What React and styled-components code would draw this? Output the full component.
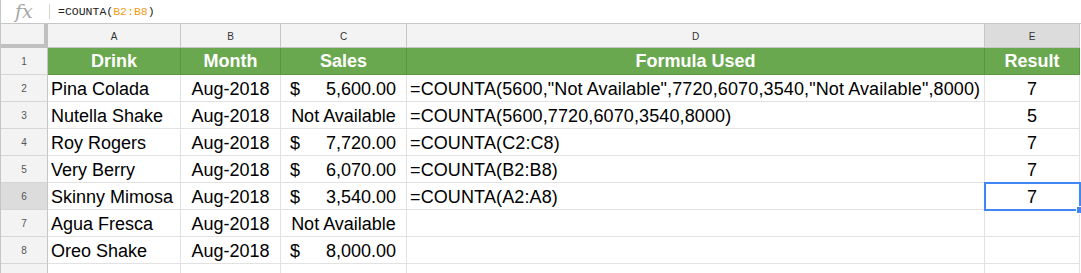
import React from "react";
import styled, { createGlobalStyle } from "styled-components";

const Global = createGlobalStyle`
  html, body { margin: 0; padding: 0; background: #fff; }
  body { font-family: "Liberation Sans", Arial, sans-serif; overflow: hidden; }
`;

const Page = styled.div`
  width: 1081px;
  height: 273px;
  overflow: hidden;
  background: #fff;
  border-left: 1px solid #c6c6c6;
  box-sizing: border-box;
`;

const FormulaBar = styled.div`
  display: flex;
  align-items: center;
  height: 24px;
  box-sizing: border-box;
  border-bottom: 1px solid #c6c6c6;
`;

const FxIcon = styled.span`
  width: 48px;
  padding-left: 14px;
  box-sizing: border-box;
  font-family: "DejaVu Serif", "Liberation Serif", serif;
  font-style: italic;
  font-size: 19px;
  color: #a6a6a6;
  line-height: 22px;
  margin-top: -2px;
`;

const Divider = styled.span`
  width: 1px;
  height: 15px;
  background: #d4d4d4;
  margin-right: 8px;
`;

const FormulaText = styled.span`
  font-family: "Liberation Mono", "DejaVu Sans Mono", monospace;
  font-size: 11.5px;
  color: #222;
`;

const RangeRef = styled.span`
  color: #f29b1a;
`;

const Grid = styled.div`
  display: grid;
  grid-template-columns: 47px 133px 100px 126px 578px 95px;
  grid-template-rows: 24px repeat(9, 27px);
  position: relative;
`;

const Cell = styled.div`
  box-sizing: border-box;
  border-right: 1px solid #e2e2e2;
  border-bottom: 1px solid #e2e2e2;
  display: flex;
  align-items: center;
  font-size: 18px;
  color: #000;
  white-space: nowrap;
  padding-top: 2px;
  letter-spacing: ${(p) => p.$spacing || "0"};
  justify-content: ${(p) => (p.$align === "center" ? "center" : p.$align === "split" ? "space-between" : "flex-start")};
  padding-left: ${(p) => (p.$align === "split" ? "9px" : p.$align === "center" ? "0" : "3px")};
  padding-right: ${(p) => (p.$align === "split" ? "10px" : "0")};
`;

const HeaderCell = styled(Cell)`
  background: #6aa84f;
  color: #fff;
  font-weight: bold;
  border-right-color: #5b9443;
  border-bottom-color: #5b9443;
  padding-top: 1px;
`;

const Corner = styled.div`
  box-sizing: border-box;
  background: #f3f3f3;
  border-right: 4px solid #c0c0c0;
  border-bottom: 4px solid #c0c0c0;
`;

const ColHead = styled.div`
  box-sizing: border-box;
  background: ${(p) => (p.$active ? "#dcdcdc" : "#f3f3f3")};
  border-right: 1px solid #c6c6c6;
  border-bottom: 1px solid #c6c6c6;
  display: flex;
  align-items: center;
  justify-content: center;
  font-size: 10px;
  color: #333;
  padding-top: 1px;
`;

const RowHead = styled.div`
  box-sizing: border-box;
  background: ${(p) => (p.$active ? "#dcdcdc" : "#f3f3f3")};
  border-right: 1px solid #c6c6c6;
  border-bottom: 1px solid #d6d6d6;
  display: flex;
  align-items: center;
  justify-content: center;
  font-size: 10px;
  color: #555;
  padding-top: 1px;
`;

const Selection = styled.div`
  position: absolute;
  left: 983px;
  top: 158px;
  width: 97px;
  height: 29px;
  box-sizing: border-box;
  border: 2px solid #4285f4;
  pointer-events: none;
`;

const Handle = styled.div`
  position: absolute;
  right: -5px;
  bottom: -5px;
  width: 6px;
  height: 6px;
  background: #4285f4;
  border: 1px solid #fff;
`;

const columns = ["A", "B", "C", "D", "E"];
const headers = ["Drink", "Month", "Sales", "Formula Used", "Result"];

const rows = [
  ["Pina Colada", "Aug-2018", { cur: "5,600.00" }, '=COUNTA(5600,"Not Available",7720,6070,3540,"Not Available",8000)', "7"],
  ["Nutella Shake", "Aug-2018", "Not Available", "=COUNTA(5600,7720,6070,3540,8000)", "5"],
  ["Roy Rogers", "Aug-2018", { cur: "7,720.00" }, "=COUNTA(C2:C8)", "7"],
  ["Very Berry", "Aug-2018", { cur: "6,070.00" }, "=COUNTA(B2:B8)", "7"],
  ["Skinny Mimosa", "Aug-2018", { cur: "3,540.00" }, "=COUNTA(A2:A8)", "7"],
  ["Agua Fresca", "Aug-2018", "Not Available", "", ""],
  ["Oreo Shake", "Aug-2018", { cur: "8,000.00" }, "", ""],
  ["", "", "", "", ""],
];

export default function App() {
  return (
    <>
      <Global />
      <Page>
        <FormulaBar>
          <FxIcon>fx</FxIcon>
          <Divider />
          <FormulaText>
            =COUNTA(<RangeRef>B2:B8</RangeRef>)
          </FormulaText>
        </FormulaBar>
        <Grid>
          <Corner />
          {columns.map((c) => (
            <ColHead key={c} $active={c === "E"}>
              {c}
            </ColHead>
          ))}
          <RowHead>1</RowHead>
          {headers.map((h) => (
            <HeaderCell key={h} $align="center">
              {h}
            </HeaderCell>
          ))}
          {rows.map((r, i) => (
            <React.Fragment key={i}>
              <RowHead $active={i === 4}>{i + 2}</RowHead>
              <Cell>{r[0]}</Cell>
              <Cell $align="center">{r[1]}</Cell>
              {typeof r[2] === "object" ? (
                <Cell $align="split">
                  <span>$</span>
                  <span>{r[2].cur}</span>
                </Cell>
              ) : (
                <Cell $align="center">{r[2]}</Cell>
              )}
              <Cell $spacing="0.12px">{r[3]}</Cell>
              <Cell $align="center">{r[4]}</Cell>
            </React.Fragment>
          ))}
          <Selection>
            <Handle />
          </Selection>
        </Grid>
      </Page>
    </>
  );
}
